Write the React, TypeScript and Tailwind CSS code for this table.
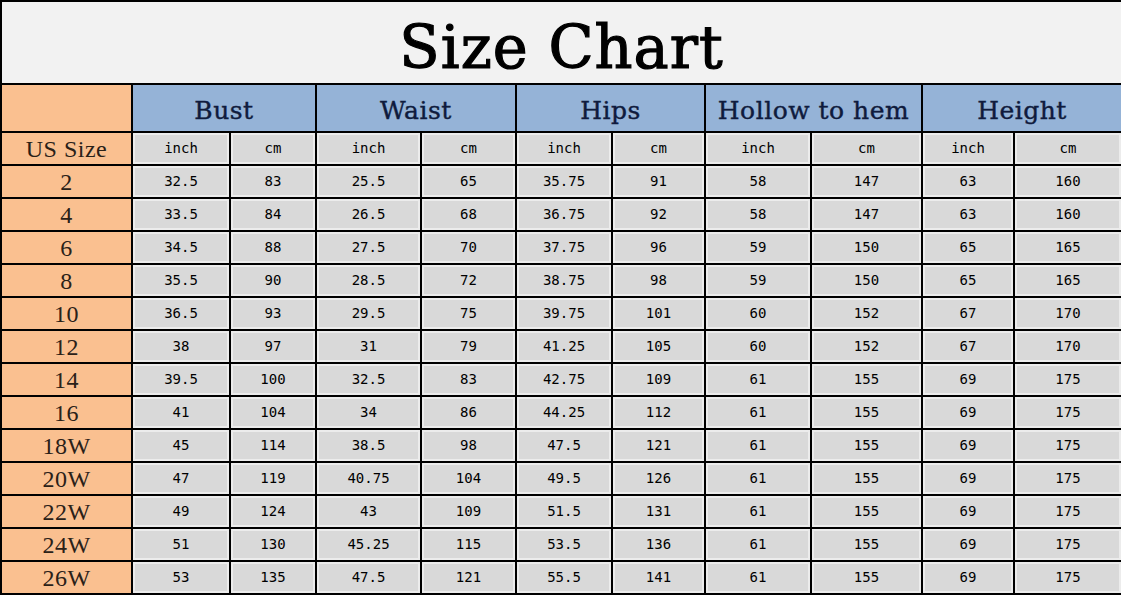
const rows: [string, string[]][] = [
  ['2', ['32.5', '83', '25.5', '65', '35.75', '91', '58', '147', '63', '160']],
  ['4', ['33.5', '84', '26.5', '68', '36.75', '92', '58', '147', '63', '160']],
  ['6', ['34.5', '88', '27.5', '70', '37.75', '96', '59', '150', '65', '165']],
  ['8', ['35.5', '90', '28.5', '72', '38.75', '98', '59', '150', '65', '165']],
  ['10', ['36.5', '93', '29.5', '75', '39.75', '101', '60', '152', '67', '170']],
  ['12', ['38', '97', '31', '79', '41.25', '105', '60', '152', '67', '170']],
  ['14', ['39.5', '100', '32.5', '83', '42.75', '109', '61', '155', '69', '175']],
  ['16', ['41', '104', '34', '86', '44.25', '112', '61', '155', '69', '175']],
  ['18W', ['45', '114', '38.5', '98', '47.5', '121', '61', '155', '69', '175']],
  ['20W', ['47', '119', '40.75', '104', '49.5', '126', '61', '155', '69', '175']],
  ['22W', ['49', '124', '43', '109', '51.5', '131', '61', '155', '69', '175']],
  ['24W', ['51', '130', '45.25', '115', '53.5', '136', '61', '155', '69', '175']],
  ['26W', ['53', '135', '47.5', '121', '55.5', '141', '61', '155', '69', '175']],
];

const groups = ['Bust', 'Waist', 'Hips', 'Hollow to hem', 'Height'];

const slab = { fontFamily: '"DejaVu Serif", serif' };
const dataFont = { fontFamily: '"DejaVu Sans Mono", monospace' };
const serif = { fontFamily: '"Liberation Serif", serif' };

function DataCell({ children }: { children: React.ReactNode }) {
  return (
    <div
      className="flex items-center justify-center bg-[#d9d9d9] text-[14px] text-black shadow-[inset_0_0_0_2px_#ececec]"
      style={dataFont}
    >
      {children}
    </div>
  );
}

function SizeCell({ children }: { children: React.ReactNode }) {
  return (
    <div
      className="flex items-center justify-center bg-[#fac090] text-[24px] tracking-[0.5px] leading-none text-[#2a2118]"
      style={serif}
    >
      {children}
    </div>
  );
}

export default function App() {
  return (
    <div className="w-[1121px] h-[595px] overflow-hidden bg-white">
      <div className="h-[83px] border-t-2 border-l-2 border-black bg-[#f2f2f2] flex items-center justify-center">
        <span
          className="text-[59px] tracking-[1px] leading-none text-black translate-y-[5px] [-webkit-text-stroke:1.2px_black]"
          style={slab}
        >
          Size Chart
        </span>
      </div>

      <div className="grid grid-cols-[129px_96px_84px_103px_93px_94px_91px_104px_109px_90px_106px] grid-rows-[46px_31px_repeat(13,31px)] gap-[2px] bg-black pl-[2px] pt-[2px] pb-[2px]">
        <div className="bg-[#fac090]" />
        {groups.map((g) => (
          <div
            key={g}
            className="col-span-2 flex items-center justify-center bg-[#95b3d7] text-[25px] tracking-[0.5px] leading-none text-[#0f1b3d] [-webkit-text-stroke:0.4px_#0f1b3d]"
            style={slab}
          >
            <span className="translate-y-[2px]">{g}</span>
          </div>
        ))}

        <SizeCell>US Size</SizeCell>
        {groups.map((g) => (
          <>
            <DataCell key={g + 'in'}>inch</DataCell>
            <DataCell key={g + 'cm'}>cm</DataCell>
          </>
        ))}

        {rows.map(([size, vals]) => (
          <>
            <SizeCell key={size}>{size}</SizeCell>
            {vals.map((v, i) => (
              <DataCell key={size + i}>{v}</DataCell>
            ))}
          </>
        ))}
      </div>
    </div>
  );
}
